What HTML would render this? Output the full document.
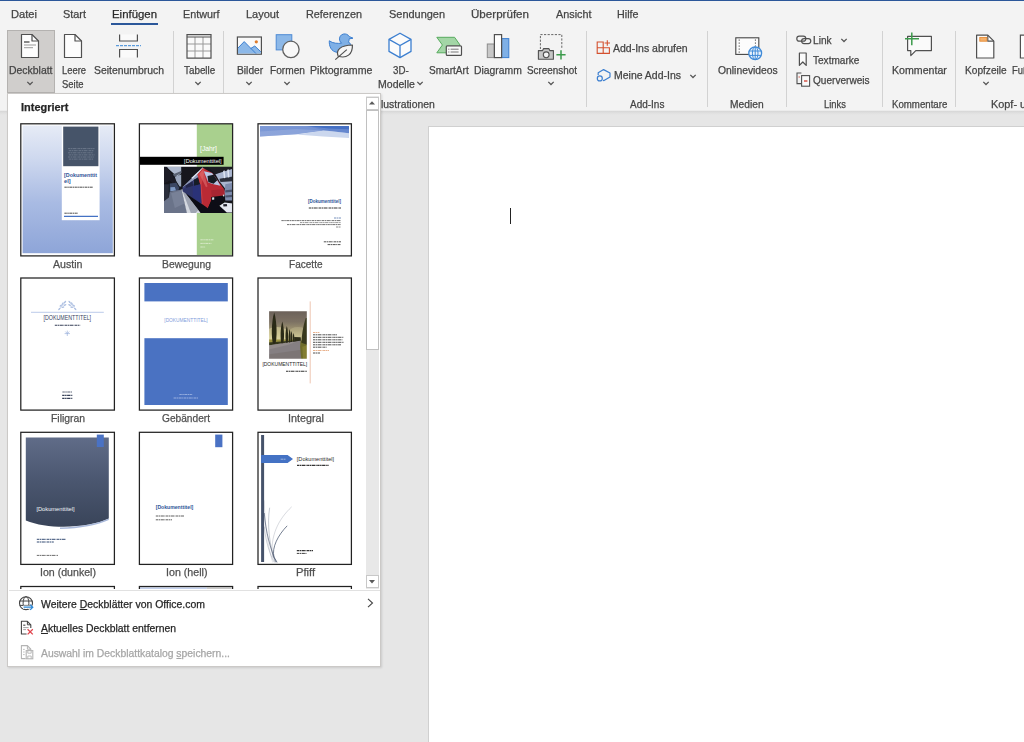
<!DOCTYPE html>
<html><head><meta charset="utf-8"><title>Word</title>
<style>
html,body{margin:0;padding:0}
body{width:1024px;height:742px;overflow:hidden;position:relative;background:#e6e6e6;font-family:"Liberation Sans",sans-serif;}
.r{position:absolute;display:block}
.t{position:absolute;white-space:nowrap;transform-origin:0 50%;display:block;-webkit-text-stroke:0.25px currentColor}
u{text-decoration:underline;text-underline-offset:1px}
svg{overflow:visible}
</style></head><body>
<div class="r" style="left:0px;top:0px;width:1024px;height:111px;background:#f3f3f3;"></div>
<div class="r" style="left:0px;top:0px;width:1024px;height:1px;background:#2b579a;"></div>
<div class="r" style="left:0px;top:110px;width:1024px;height:1px;background:#ececec;"></div>
<div class="r" style="left:0px;top:111px;width:1024px;height:4px;background:linear-gradient(#d6d6d6,#e0e0e0 50%,#e6e6e6);"></div>
<div class="r" style="left:429px;top:127px;width:600px;height:620px;background:#fff;box-shadow:0 0 0 1px #d0d0d0"></div>
<div class="r" style="left:510px;top:208px;width:1px;height:16px;background:#222;"></div>
<span class="t" style="left:11.0px;top:7.2px;font-size:11px;line-height:14px;color:#444;transform:scaleX(1.013)">Datei</span>
<span class="t" style="left:63.0px;top:7.2px;font-size:11px;line-height:14px;color:#444;transform:scaleX(0.990)">Start</span>
<span class="t" style="left:111.5px;top:7.2px;font-size:11px;line-height:14px;color:#2a2a2a;transform:scaleX(1.036)">Einfügen</span>
<div class="r" style="left:111px;top:23px;width:47px;height:2px;background:#2b579a;"></div>
<span class="t" style="left:182.5px;top:7.2px;font-size:11px;line-height:14px;color:#444;transform:scaleX(0.979)">Entwurf</span>
<span class="t" style="left:246.0px;top:7.2px;font-size:11px;line-height:14px;color:#444;transform:scaleX(0.999)">Layout</span>
<span class="t" style="left:305.5px;top:7.2px;font-size:11px;line-height:14px;color:#444;transform:scaleX(0.985)">Referenzen</span>
<span class="t" style="left:388.5px;top:7.2px;font-size:11px;line-height:14px;color:#444;transform:scaleX(0.995)">Sendungen</span>
<span class="t" style="left:470.5px;top:7.2px;font-size:11px;line-height:14px;color:#444;transform:scaleX(1.054)">Überprüfen</span>
<span class="t" style="left:555.5px;top:7.2px;font-size:11px;line-height:14px;color:#444;transform:scaleX(0.984)">Ansicht</span>
<span class="t" style="left:617.0px;top:7.2px;font-size:11px;line-height:14px;color:#444;transform:scaleX(0.977)">Hilfe</span>
<div class="r" style="left:7px;top:30px;width:48px;height:63px;background:#d0cecc;box-shadow:inset 0 0 0 1px #b4b2b0, inset 0 -1px 0 0 #9c9a98"></div>
<span class="t" style="left:9.0px;top:62.9px;font-size:10.5px;line-height:14px;color:#444;transform:scaleX(0.994)">Deckblatt</span>
<svg class="r" style="left:26px;top:80px" width="8" height="6" viewBox="0 0 8 6"><path d="M1.3 1.9 L4 4.5 L6.7 1.9" fill="none" stroke="#555" stroke-width="1.3"/></svg>
<span class="t" style="left:61.5px;top:62.9px;font-size:10.5px;line-height:14px;color:#444;transform:scaleX(0.894)">Leere</span>
<span class="t" style="left:62.0px;top:76.9px;font-size:10.5px;line-height:14px;color:#444;transform:scaleX(0.898)">Seite</span>
<span class="t" style="left:93.5px;top:62.9px;font-size:10.5px;line-height:14px;color:#444;transform:scaleX(0.991)">Seitenumbruch</span>
<span class="t" style="left:183.5px;top:62.9px;font-size:10.5px;line-height:14px;color:#444;transform:scaleX(0.938)">Tabelle</span>
<svg class="r" style="left:194px;top:80px" width="8" height="6" viewBox="0 0 8 6"><path d="M1.3 1.9 L4 4.5 L6.7 1.9" fill="none" stroke="#555" stroke-width="1.3"/></svg>
<span class="t" style="left:236.6px;top:62.9px;font-size:10.5px;line-height:14px;color:#444;transform:scaleX(0.976)">Bilder</span>
<svg class="r" style="left:245px;top:80px" width="8" height="6" viewBox="0 0 8 6"><path d="M1.3 1.9 L4 4.5 L6.7 1.9" fill="none" stroke="#555" stroke-width="1.3"/></svg>
<span class="t" style="left:270.0px;top:62.9px;font-size:10.5px;line-height:14px;color:#444;transform:scaleX(0.968)">Formen</span>
<svg class="r" style="left:283px;top:80px" width="8" height="6" viewBox="0 0 8 6"><path d="M1.3 1.9 L4 4.5 L6.7 1.9" fill="none" stroke="#555" stroke-width="1.3"/></svg>
<span class="t" style="left:310.0px;top:62.9px;font-size:10.5px;line-height:14px;color:#444;transform:scaleX(1.009)">Piktogramme</span>
<span class="t" style="left:393.3px;top:62.9px;font-size:10.5px;line-height:14px;color:#444;transform:scaleX(0.928)">3D-</span>
<span class="t" style="left:377.5px;top:76.9px;font-size:10.5px;line-height:14px;color:#444;transform:scaleX(1.004)">Modelle</span>
<svg class="r" style="left:416px;top:80px" width="8" height="6" viewBox="0 0 8 6"><path d="M1.3 1.9 L4 4.5 L6.7 1.9" fill="none" stroke="#555" stroke-width="1.3"/></svg>
<span class="t" style="left:429.0px;top:62.9px;font-size:10.5px;line-height:14px;color:#444;transform:scaleX(0.958)">SmartArt</span>
<span class="t" style="left:474.0px;top:62.9px;font-size:10.5px;line-height:14px;color:#444;transform:scaleX(0.987)">Diagramm</span>
<span class="t" style="left:527.2px;top:62.9px;font-size:10.5px;line-height:14px;color:#444;transform:scaleX(0.941)">Screenshot</span>
<svg class="r" style="left:547px;top:80px" width="8" height="6" viewBox="0 0 8 6"><path d="M1.3 1.9 L4 4.5 L6.7 1.9" fill="none" stroke="#555" stroke-width="1.3"/></svg>
<span class="t" style="left:613.3px;top:40.9px;font-size:10.5px;line-height:14px;color:#444;transform:scaleX(0.999)">Add-Ins abrufen</span>
<span class="t" style="left:614.0px;top:68.4px;font-size:10.5px;line-height:14px;color:#444;transform:scaleX(0.998)">Meine Add-Ins</span>
<svg class="r" style="left:689px;top:73px" width="8" height="6" viewBox="0 0 8 6"><path d="M1.3 1.9 L4 4.5 L6.7 1.9" fill="none" stroke="#555" stroke-width="1.3"/></svg>
<span class="t" style="left:717.5px;top:62.9px;font-size:10.5px;line-height:14px;color:#444;transform:scaleX(0.985)">Onlinevideos</span>
<span class="t" style="left:813.4px;top:32.9px;font-size:10.5px;line-height:14px;color:#444;transform:scaleX(0.966)">Link</span>
<svg class="r" style="left:840px;top:37px" width="8" height="6" viewBox="0 0 8 6"><path d="M1.3 1.9 L4 4.5 L6.7 1.9" fill="none" stroke="#555" stroke-width="1.3"/></svg>
<span class="t" style="left:813.4px;top:52.9px;font-size:10.5px;line-height:14px;color:#444;transform:scaleX(0.958)">Textmarke</span>
<span class="t" style="left:813.0px;top:72.9px;font-size:10.5px;line-height:14px;color:#444;transform:scaleX(0.960)">Querverweis</span>
<span class="t" style="left:891.5px;top:62.9px;font-size:10.5px;line-height:14px;color:#444;transform:scaleX(1.010)">Kommentar</span>
<span class="t" style="left:964.7px;top:62.9px;font-size:10.5px;line-height:14px;color:#444;transform:scaleX(0.965)">Kopfzeile</span>
<svg class="r" style="left:981.5px;top:80px" width="8" height="6" viewBox="0 0 8 6"><path d="M1.3 1.9 L4 4.5 L6.7 1.9" fill="none" stroke="#555" stroke-width="1.3"/></svg>
<span class="t" style="left:1012.3px;top:62.9px;font-size:10.5px;line-height:14px;color:#444;transform:scaleX(0.895)">Fuß</span>
<span class="t" style="left:381.0px;top:96.9px;font-size:10.5px;line-height:14px;color:#444;transform:scaleX(0.991)">lustrationen</span>
<span class="t" style="left:629.8px;top:96.9px;font-size:10.5px;line-height:14px;color:#444;transform:scaleX(0.951)">Add-Ins</span>
<span class="t" style="left:730.4px;top:96.9px;font-size:10.5px;line-height:14px;color:#444;transform:scaleX(0.976)">Medien</span>
<span class="t" style="left:823.6px;top:96.9px;font-size:10.5px;line-height:14px;color:#444;transform:scaleX(0.893)">Links</span>
<span class="t" style="left:891.5px;top:96.9px;font-size:10.5px;line-height:14px;color:#444;transform:scaleX(0.920)">Kommentare</span>
<span class="t" style="left:990.9px;top:96.9px;font-size:10.5px;line-height:14px;color:#444;transform:scaleX(1.037)">Kopf- u</span>
<div class="r" style="left:173px;top:31px;width:1px;height:76px;background:#d2d2d2;"></div>
<div class="r" style="left:223px;top:31px;width:1px;height:76px;background:#d2d2d2;"></div>
<div class="r" style="left:586px;top:31px;width:1px;height:76px;background:#d2d2d2;"></div>
<div class="r" style="left:707px;top:31px;width:1px;height:76px;background:#d2d2d2;"></div>
<div class="r" style="left:786px;top:31px;width:1px;height:76px;background:#d2d2d2;"></div>
<div class="r" style="left:882px;top:31px;width:1px;height:76px;background:#d2d2d2;"></div>
<div class="r" style="left:955px;top:31px;width:1px;height:76px;background:#d2d2d2;"></div>
<svg class="r" style="left:0;top:0" width="1024" height="111" viewBox="0 0 1024 111"><path d="M21.5 34.5 H32.0 L38.5 41.0 V57.5 H21.5 Z" fill="#fdfdfd" stroke="#505050" stroke-width="1.2" stroke-linejoin="round"/><path d="M32.0 34.5 V41.0 H38.5" fill="none" stroke="#505050" stroke-width="1.2" stroke-linejoin="round"/><path d="M24 42 H29.5" stroke="#555" stroke-width="1.4"/><path d="M24 45 H36 M24 47.7 H33" stroke="#9a9a9a" stroke-width="1"/><path d="M64.5 34.5 H75.0 L81.5 41.0 V57.5 H64.5 Z" fill="#fdfdfd" stroke="#505050" stroke-width="1.2" stroke-linejoin="round"/><path d="M75.0 34.5 V41.0 H81.5" fill="none" stroke="#505050" stroke-width="1.2" stroke-linejoin="round"/><path d="M119.6 34.4 V41 H137.4 V34.4" fill="#fafafa" stroke="#505050" stroke-width="1.2"/><path d="M119.6 57.6 V49.5 H137.4 V57.6" fill="#fafafa" stroke="#505050" stroke-width="1.2"/><path d="M116 45.6 H141" stroke="#5b9bdc" stroke-width="1.2" stroke-dasharray="3 1"/><rect x="187" y="34.6" width="24" height="23.5" fill="#fafafa"/><path d="M195 37 V58 M203 37 V58 M187 44 H211 M187 51 H211" stroke="#9a9a9a" stroke-width="1"/><path d="M187 34.6 H211 V58.1 H187 Z M187 37 H211" fill="none" stroke="#505050" stroke-width="1.2"/><rect x="237.4" y="37" width="24" height="17.2" fill="#fafafa" stroke="#505050" stroke-width="1.2"/><path d="M238 48 L244.2 41.6 L250.6 48.2 L254.8 46 L260.8 51.8 V53.6 H238 Z" fill="#8cb8e8"/><path d="M238 48 L244.2 41.6 L256 53.6 M250.6 48.6 L254.8 46 L260.8 51.8" fill="none" stroke="#3c7fd0" stroke-width="1"/><circle cx="256.3" cy="41.8" r="1.6" fill="#e07c2c"/><rect x="276.2" y="34.7" width="15.6" height="15.2" fill="#8cb8e8" stroke="#4e8ad4" stroke-width="1"/><circle cx="290.9" cy="49.4" r="8.2" fill="#f8f8f8" stroke="#606060" stroke-width="1.3"/><path d="M329.3 40.8 C329 46 331 51.5 337 52.3 H346 C351 51.5 352 46.5 350 43.2 L348.3 42.2 C349.2 40.8 349.2 39.6 349 38.9 L353 38.2 L349.3 36.6 C348 34.3 345.5 33.7 343.6 34 C340.5 34.5 339 37.5 339.6 40.2 C339.9 41.6 340.8 42.6 341.6 43.2 C338 43.6 333 43.6 329.3 40.8 Z" fill="#7fb0e6" stroke="#3c7fd0" stroke-width="1"/><path d="M338.2 56.2 C335.5 50 340.5 45.2 352.4 45 C352.8 54.5 346.5 58.8 338.2 56.2 Z" fill="#f6f6f6" stroke="#505050" stroke-width="1.2" stroke-linejoin="round"/><path d="M335.3 59.6 L346.8 49.6" stroke="#505050" stroke-width="1.2"/><path d="M400 33.2 L411 39.4 V51.4 L400 57.6 L389 51.4 V39.4 Z" fill="#fbfbfb" stroke="#3c7fd0" stroke-width="1.3" stroke-linejoin="round"/><path d="M389 39.4 L400 45.6 L411 39.4 M400 45.6 V57.6" fill="none" stroke="#3c7fd0" stroke-width="1.3"/><path d="M436.8 37.3 H454.6 L460 45 L455 52.8 H436.8 L442.4 45 Z" fill="#a3d6a6" stroke="#58ab5e" stroke-width="1"/><rect x="446.3" y="45.8" width="15.2" height="9.6" rx="1" fill="#fafafa" stroke="#505050" stroke-width="1.2"/><path d="M450.6 49.2 H458.6 M450.6 52 H458.6" stroke="#777" stroke-width="1"/><path d="M448.2 49.2 H449.4 M448.2 52 H449.4" stroke="#777" stroke-width="1"/><rect x="487.3" y="44" width="7" height="13.6" fill="#c8c8c8" stroke="#8c8c8c" stroke-width="1"/><rect x="501.6" y="38.6" width="7.2" height="19" fill="#7fb0e6" stroke="#3c7fd0" stroke-width="1"/><rect x="494.4" y="34.6" width="7.2" height="23" fill="#fdfdfd" stroke="#505050" stroke-width="1.2"/><path d="M540.4 49 V34.6 H561.8 V49" fill="none" stroke="#666" stroke-width="1" stroke-dasharray="2.2 1.4"/><path d="M538.4 50.6 H542.6 L543.6 48.6 H548.8 L549.8 50.6 H553.4 V59.2 H538.4 Z" fill="#c6c6c6" stroke="#505050" stroke-width="1.1" stroke-linejoin="round"/><circle cx="546.2" cy="54.8" r="2.9" fill="#f4f4f4" stroke="#505050" stroke-width="1.1"/><path d="M556.4 54.8 H565.6 M561 50.2 V59.4" stroke="#3c9b4c" stroke-width="1.5"/><path d="M597.2 42 H603.2 V53.4 H597.2 Z M597.2 47.7 H609.4 V53.4 H603.2 M603.2 47.7 V42" fill="none" stroke="#d4502e" stroke-width="1.1"/><path d="M604.6 43 H610 M607.3 40.2 V45.8" stroke="#d4502e" stroke-width="1.1"/><path d="M598.2 75 V72.8 L603.6 69.6 L610 73 V77 L604 80.6 L603 80.2" fill="none" stroke="#3c7fd0" stroke-width="1.2" stroke-linejoin="round"/><circle cx="599.8" cy="78.4" r="2.5" fill="none" stroke="#3c7fd0" stroke-width="1.2"/><rect x="735.8" y="37.8" width="23" height="16.6" fill="#fcfcfc" stroke="#444" stroke-width="1.1"/><path d="M739.2 39.5 V53 M755.4 39.5 V46" stroke="#444" stroke-width="1" stroke-dasharray="1.2 1.8"/><circle cx="755.2" cy="53.2" r="6.4" fill="#eaf3fc" stroke="#3f8ad8" stroke-width="1.3"/><ellipse cx="755.2" cy="53.2" rx="2.8" ry="6.4" fill="none" stroke="#3f8ad8" stroke-width="1"/><path d="M749.4 51 H761 M749.4 55.4 H761 M755.2 46.8 V59.6" stroke="#3f8ad8" stroke-width="1"/><rect x="796.8" y="36.2" width="9" height="5" rx="2.5" fill="none" stroke="#505050" stroke-width="1.2"/><rect x="801.6" y="38.6" width="9.2" height="5" rx="2.5" fill="none" stroke="#505050" stroke-width="1.2"/><path d="M799.4 53 H806.2 V65.4 L802.8 62 L799.4 65.4 Z" fill="#fafafa" stroke="#505050" stroke-width="1.2" stroke-linejoin="round"/><path d="M801.4 73 H797 V83.6 H801.4" fill="none" stroke="#505050" stroke-width="1.1"/><rect x="801.6" y="75.6" width="8" height="10.6" fill="#fafafa" stroke="#505050" stroke-width="1.1"/><path d="M804 81 H807.4" stroke="#d03a2a" stroke-width="1.3"/><path d="M798.6 77 H799.8" stroke="#d03a2a" stroke-width="1.2"/><path d="M907.6 36.4 H931.4 V50.6 H915.8 L910.8 55.6 V50.6 H907.6 Z" fill="#fafafa" stroke="#505050" stroke-width="1.2" stroke-linejoin="round"/><path d="M905 38.8 H919 M911.8 32.4 V45.2" stroke="#3c9b4c" stroke-width="1.5"/><path d="M976.6 35.2 H987.8000000000001 L993.8000000000001 41.2 V58.0 H976.6 Z" fill="#fdfdfd" stroke="#505050" stroke-width="1.2" stroke-linejoin="round"/><path d="M987.8000000000001 35.2 V41.2 H993.8000000000001" fill="none" stroke="#505050" stroke-width="1.2" stroke-linejoin="round"/><rect x="979.8" y="37.4" width="7" height="3.8" fill="#f4b06a" stroke="#e58a34" stroke-width="0.9"/><path d="M1026 35.2 H1020.4 V58 H1026" fill="#fdfdfd" stroke="#505050" stroke-width="1.2"/></svg>
<div class="r" style="left:8px;top:94px;width:372px;height:572px;background:#fff;box-shadow:0 0 0 1px #cbc9c7, 1px 1px 2px 1px rgba(0,0,0,.12)"></div>
<span class="t" style="left:21.0px;top:100.2px;font-size:11px;line-height:14px;color:#262626;font-weight:bold;transform:scaleX(0.996)">Integriert</span>
<div class="r" style="left:365.5px;top:96px;width:13px;height:493px;background:#e8e8e8;"></div>
<div class="r" style="left:365.5px;top:110px;width:13px;height:240px;background:#fff;box-shadow:inset 0 0 0 1px #c0c0c0"></div>
<div class="r" style="left:365.5px;top:97px;width:13px;height:13px;background:#fff;box-shadow:inset 0 0 0 1px #c8c8c8"></div>
<div class="r" style="left:365.5px;top:575px;width:13px;height:13px;background:#fff;box-shadow:inset 0 0 0 1px #c8c8c8"></div>
<svg class="r" style="left:369px;top:101.4px" width="6" height="4"><path d="M0 3.6 L3 0.2 L6 3.6Z" fill="#5a5a5a"/></svg>
<svg class="r" style="left:369px;top:579.6px" width="6" height="4"><path d="M0 0 L3 3.4 L6 0Z" fill="#5a5a5a"/></svg>
<svg class="r" style="left:8px;top:94px;overflow:hidden" width="358" height="495" viewBox="8 94 358 495" font-family="Liberation Sans, sans-serif"><defs><linearGradient id="ga" x1="0" y1="0" x2="0" y2="1"><stop offset="0" stop-color="#e6ebf6"/><stop offset="0.25" stop-color="#cfd9ef"/><stop offset="0.6" stop-color="#a9bbe3"/><stop offset="1" stop-color="#8ea5d8"/></linearGradient><clipPath id="cb"><rect x="164" y="166.8" width="68.2" height="46.2"/></clipPath><filter id="bl" x="-5%" y="-5%" width="110%" height="110%"><feGaussianBlur stdDeviation="0.45"/></filter><linearGradient id="gf" x1="0" y1="0" x2="1" y2="0"><stop offset="0" stop-color="#7d99d6"/><stop offset="1" stop-color="#6f8fd2"/></linearGradient><clipPath id="ci"><rect x="269.1" y="311.3" width="37.7" height="47.5"/></clipPath><linearGradient id="gi" x1="0" y1="0" x2="0" y2="1"><stop offset="0" stop-color="#685e58"/><stop offset="0.25" stop-color="#7d7264"/><stop offset="0.42" stop-color="#a39972"/><stop offset="0.56" stop-color="#cbc391"/><stop offset="0.66" stop-color="#c4bb84"/><stop offset="1" stop-color="#8a867c"/></linearGradient><filter id="bi" x="-5%" y="-5%" width="110%" height="110%"><feGaussianBlur stdDeviation="0.5"/></filter><linearGradient id="gd" x1="0" y1="0" x2="0" y2="1"><stop offset="0" stop-color="#606c88"/><stop offset="0.5" stop-color="#4a566f"/><stop offset="1" stop-color="#394459"/></linearGradient></defs><rect x="20.2" y="123.2" width="94.8" height="133.3" fill="#fff"/><rect x="138.8" y="123.2" width="94.4" height="133.3" fill="#fff"/><rect x="257.4" y="123.2" width="94.6" height="133.3" fill="#fff"/><rect x="20.2" y="277.4" width="94.8" height="133.3" fill="#fff"/><rect x="138.8" y="277.4" width="94.4" height="133.3" fill="#fff"/><rect x="257.4" y="277.4" width="94.6" height="133.3" fill="#fff"/><rect x="20.2" y="431.7" width="94.8" height="133.3" fill="#fff"/><rect x="138.8" y="431.7" width="94.4" height="133.3" fill="#fff"/><rect x="257.4" y="431.7" width="94.6" height="133.3" fill="#fff"/><rect x="20.2" y="585.9" width="94.8" height="133.3" fill="#fff"/><rect x="138.8" y="585.9" width="94.4" height="133.3" fill="#fff"/><rect x="257.4" y="585.9" width="94.6" height="133.3" fill="#fff"/><rect x="139.8" y="587.3" width="67" height="4" fill="#c3d0ec"/><rect x="206.8" y="587.3" width="25" height="4" fill="#c9c9c9"/><rect x="22.6" y="125.6" width="90.2" height="127.6" fill="url(#ga)"/><rect x="61.8" y="125.6" width="37.8" height="94.6" fill="#fff"/><rect x="63.2" y="126.6" width="35.2" height="39.6" fill="#465469"/><path d="M68.0 148.6 H94.5" stroke="#9aa3b2" stroke-width="0.8" opacity="0.55" stroke-dasharray="2.4 0.5 1.5 0.5 3.2 0.5 1 0.5"/><path d="M68.8 150.7 H93.8" stroke="#9aa3b2" stroke-width="0.8" opacity="0.55" stroke-dasharray="2.4 0.5 1.5 0.5 3.2 0.5 1 0.5"/><path d="M68.0 152.8 H93.1" stroke="#9aa3b2" stroke-width="0.8" opacity="0.55" stroke-dasharray="2.4 0.5 1.5 0.5 3.2 0.5 1 0.5"/><path d="M68.8 154.9 H94.5" stroke="#9aa3b2" stroke-width="0.8" opacity="0.55" stroke-dasharray="2.4 0.5 1.5 0.5 3.2 0.5 1 0.5"/><path d="M68.0 157 H93.8" stroke="#9aa3b2" stroke-width="0.8" opacity="0.55" stroke-dasharray="2.4 0.5 1.5 0.5 3.2 0.5 1 0.5"/><path d="M68.8 159.1 H93.1" stroke="#9aa3b2" stroke-width="0.8" opacity="0.55" stroke-dasharray="2.4 0.5 1.5 0.5 3.2 0.5 1 0.5"/><text x="64" y="176.6" font-size="5.6" fill="#2f5597" font-weight="bold" textLength="33" lengthAdjust="spacingAndGlyphs">[Dokumenttit</text><text x="64" y="183.2" font-size="5.6" fill="#2f5597" font-weight="bold" textLength="6.6" lengthAdjust="spacingAndGlyphs">el]</text><path d="M64.4 187.2 H93" stroke="#222" stroke-width="1" opacity="0.8" stroke-dasharray="2.4 0.5 1.5 0.5 3.2 0.5 1 0.5"/><path d="M64.4 213.2 H78" stroke="#222" stroke-width="1" opacity="0.8" stroke-dasharray="2.4 0.5 1.5 0.5 3.2 0.5 1 0.5"/><path d="M64 216.3 H98" stroke="#4472c4" stroke-width="1.3" opacity="1"/><rect x="196.8" y="124" width="35.4" height="131" fill="#a9d08e"/><text x="208.5" y="150.8" font-size="6.6" fill="#fff" text-anchor="middle" textLength="17" lengthAdjust="spacingAndGlyphs">[Jahr]</text><rect x="139" y="156.8" width="84.6" height="8" fill="#000"/><text x="221.6" y="163" font-size="5.6" fill="#fff" text-anchor="end" textLength="37.5" lengthAdjust="spacingAndGlyphs">[Dokumenttitel]</text><g clip-path="url(#cb)"><g filter="url(#bl)"><rect x="162" y="165" width="72" height="50" fill="#14161c"/><polygon points="165.9,166.5 181.2,166.5 181.2,173.1 177.1,176.8 174.8,174.6" fill="#aeb9cd"/><polygon points="172.6,174.6 181.2,170.9 181.2,173.1 174.8,176.8" fill="#5a6272"/><polygon points="174.8,176.8 181.2,174.6 181.2,186.5 179.3,186.5 176.3,181.3" fill="#9aa6bc"/><polygon points="163.0,166.5 166.7,166.5 180.0,187.2 178.6,188.7 169.7,180.6 163.0,184.3" fill="#1c1f27"/><polygon points="169.7,183.5 176.3,182.8 179.3,188.0 177.8,191.7 169.7,191.7" fill="#3a4664"/><polygon points="170.4,187.2 174.8,186.9 176.0,190.6 170.4,191.3" fill="#7f9ac4"/><polygon points="163.0,184.3 168.9,184.3 168.9,199.1 163.0,202.1" fill="#2a2e3a"/><polygon points="163.0,202.1 168.9,197.6 169.7,191.7 181.5,189.5 187.5,214.0 163.0,214.0" fill="#6b7389"/><polygon points="171.1,193.2 181.2,190.6 184.5,203.6 174.8,208.0" fill="#788197"/><polygon points="181.4,189.6 182.6,189.3 201.6,214.0 187.1,214.0" fill="#d4d8e0"/><polygon points="182.3,190.6 183.2,190.2 198.6,209.5 194.9,214.0 191.2,214.0" fill="#9ea4b2"/><polygon points="182.6,189.3 201.6,203.6 207.5,208.0 223.8,203.6 232.8,206.5 232.8,214.0 201.6,214.0" fill="#0e1016"/><polygon points="182.6,186.9 202.7,167.6 204.5,169.1 200.1,176.1 183.4,188.0" fill="#8e97b6"/><polygon points="191.2,178.0 202.7,167.6 203.4,168.3 192.7,178.7" fill="#dfe4f0"/><polygon points="182.6,187.6 200.5,175.7 201.6,203.9 182.6,191.3" fill="#2f3568"/><polygon points="182.6,187.6 200.5,175.7 200.5,180.6 182.6,188.9" fill="#3e457e"/><polygon points="193.8,179.8 200.1,176.8 200.5,184.3 194.1,185.8" fill="#191b28"/><polygon points="185.6,185.8 192.7,180.9 193.0,185.8 185.8,188.0" fill="#23264a"/><polygon points="197.5,174.6 203.1,168.1 212.3,173.1 217.5,180.2 224.0,188.9 225.2,193.2 223.1,196.9 212.0,199.1 207.9,208.2 201.6,203.7 200.2,184.3" fill="#b92b35"/><polygon points="197.5,174.6 203.1,168.1 204.5,169.4 201.6,184.3 202.7,203.6 201.6,203.7 200.2,184.3" fill="#cb4045"/><polygon points="199.3,173.9 203.1,169.4 207.5,186.5 206.0,187.2" fill="#e8777a" opacity="0.5"/><polygon points="192.7,186.5 200.5,184.3 201.6,203.7 192.7,196.9" fill="#2c3278"/><polygon points="203.8,171.3 212.0,173.1 217.2,180.2 220.5,185.8 213.5,184.3 208.3,182.4" fill="#b8c6e4"/><polygon points="207.5,176.1 213.6,174.8 217.3,180.2 213.6,183.7 208.3,182.0" fill="#171a22"/><polygon points="211.2,190.2 224.0,188.9 225.2,193.2 223.1,196.9 212.0,199.1" fill="#a82630"/><polygon points="211.2,196.9 223.8,195.4 225.3,200.6 219.4,206.5 207.9,208.2 211.2,200.6" fill="#0c0d12"/><polygon points="212.0,197.5 214.2,197.2 214.3,199.5 212.3,199.9" fill="#dfe3ea"/><polygon points="222.8,194.7 224.3,194.4 224.4,196.3 223.1,196.6" fill="#cfd4de"/><polygon points="215.3,173.9 232.8,167.2 232.8,186.5 225.3,188.7 219.4,181.3" fill="#aab6d0"/><polygon points="207.5,166.5 232.8,166.5 232.8,168.7 215.3,174.2" fill="#1a1c24"/><polygon points="219.4,178.7 232.8,176.5 232.8,181.3 220.5,182.0" fill="#2a2e3a"/><polygon points="223.1,170.9 224.6,170.3 225.3,178.0 224.0,178.2" fill="#dfe6f4"/><polygon points="227.2,169.8 228.7,169.3 229.4,177.2 227.9,177.4" fill="#dfe6f4"/><polygon points="225.3,184.3 232.8,182.8 232.8,200.6 225.3,200.6 224.6,191.7" fill="#7d8cad"/><polygon points="225.3,190.2 232.8,189.5 232.8,191.7 225.3,192.4" fill="#4a536c"/><polygon points="225.3,195.4 232.8,194.7 232.8,196.9 225.3,197.6" fill="#4a536c"/><polygon points="219.4,205.8 224.6,202.5 232.8,203.6 232.8,212.5 226.8,212.5" fill="#e4e8f0"/><polygon points="223.1,204.3 226.8,203.9 227.2,206.2 223.5,206.5" fill="#20232c"/></g></g><path d="M200.4 239.8 H213.8" stroke="#eaf4e0" stroke-width="0.9" opacity="0.8" stroke-dasharray="2.4 0.5 1.5 0.5 3.2 0.5 1 0.5"/><path d="M200.4 243.4 H211.4" stroke="#eaf4e0" stroke-width="0.9" opacity="0.8" stroke-dasharray="2.4 0.5 1.5 0.5 3.2 0.5 1 0.5"/><path d="M200.4 247 H205.4" stroke="#eaf4e0" stroke-width="0.9" opacity="0.8" stroke-dasharray="2.4 0.5 1.5 0.5 3.2 0.5 1 0.5"/><polygon points="260.0,126.0 349.0,126.0 349.0,127.9 324.9,130.4 296.2,134.2 260.0,136.5" fill="url(#gf)"/><polygon points="296.2,134.4 324.9,130.4 349.0,133.3 349.0,138.1 323.0,136.5" fill="#cbd7ee"/><polygon points="309.6,126.4 349.0,127.7 349.0,133.3 324.9,130.4" fill="#6587ce"/><polygon points="306.7,126.0 349.0,126.0 349.0,129.3 328.7,128.5" fill="#4570c4"/><polygon points="260.0,131.6 296.2,128.9 324.9,130.4 296.2,134.2 260.0,136.5" fill="#9db2e0" opacity="0.5"/><text x="341" y="203.4" font-size="5" fill="#2f5597" text-anchor="end" font-weight="bold" textLength="33" lengthAdjust="spacingAndGlyphs">[Dokumenttitel]</text><path d="M308.8 208 H341" stroke="#111" stroke-width="1" opacity="0.85" stroke-dasharray="2.4 0.5 1.5 0.5 3.2 0.5 1 0.5"/><path d="M334 218 H341" stroke="#2f5597" stroke-width="0.8" opacity="0.8" stroke-dasharray="2.4 0.5 1.5 0.5 3.2 0.5 1 0.5"/><path d="M281.4 220.6 H341" stroke="#111" stroke-width="0.8" opacity="0.75" stroke-dasharray="2.4 0.5 1.5 0.5 3.2 0.5 1 0.5"/><path d="M300 222.6 H341" stroke="#111" stroke-width="0.8" opacity="0.55" stroke-dasharray="2.4 0.5 1.5 0.5 3.2 0.5 1 0.5"/><path d="M287 224.6 H341" stroke="#111" stroke-width="0.8" opacity="0.75" stroke-dasharray="2.4 0.5 1.5 0.5 3.2 0.5 1 0.5"/><path d="M336 227 H341" stroke="#111" stroke-width="0.8" opacity="0.6" stroke-dasharray="2.4 0.5 1.5 0.5 3.2 0.5 1 0.5"/><path d="M323.8 241.8 H341" stroke="#111" stroke-width="0.9" opacity="0.8" stroke-dasharray="2.4 0.5 1.5 0.5 3.2 0.5 1 0.5"/><path d="M327.6 244.6 H341" stroke="#111" stroke-width="0.9" opacity="0.8" stroke-dasharray="2.4 0.5 1.5 0.5 3.2 0.5 1 0.5"/><g stroke="#9db3dc" stroke-width="0.6" fill="none" opacity="0.85"><path d="M59.2 309.4 L65.6 301.6 M75.4 309.4 L69 301.6"/></g><g fill="#9db3dc" opacity="0.8"><ellipse cx="60.8" cy="305.6" rx="1.5" ry="0.75" transform="rotate(-40 60.8 305.6)"/><ellipse cx="73.8" cy="305.6" rx="1.5" ry="0.75" transform="rotate(40 73.8 305.6)"/><ellipse cx="62.9" cy="307.2" rx="1.5" ry="0.75" transform="rotate(-15 62.9 307.2)"/><ellipse cx="71.7" cy="307.2" rx="1.5" ry="0.75" transform="rotate(15 71.7 307.2)"/><ellipse cx="62.7" cy="303.6" rx="1.5" ry="0.75" transform="rotate(-60 62.7 303.6)"/><ellipse cx="71.9" cy="303.6" rx="1.5" ry="0.75" transform="rotate(60 71.9 303.6)"/><ellipse cx="65.0" cy="305.0" rx="1.5" ry="0.75" transform="rotate(-25 65.0 305.0)"/><ellipse cx="69.6" cy="305.0" rx="1.5" ry="0.75" transform="rotate(25 69.6 305.0)"/><ellipse cx="65.0" cy="302.0" rx="1.5" ry="0.75" transform="rotate(-50 65.0 302.0)"/><ellipse cx="69.6" cy="302.0" rx="1.5" ry="0.75" transform="rotate(50 69.6 302.0)"/><ellipse cx="59.3" cy="309.0" rx="1.5" ry="0.75" transform="rotate(-50 59.3 309.0)"/><ellipse cx="75.3" cy="309.0" rx="1.5" ry="0.75" transform="rotate(50 75.3 309.0)"/></g><path d="M31 312.3 H103.8" stroke="#a9bee4" stroke-width="0.8" opacity="1"/><text x="67.3" y="319.7" font-size="6.6" fill="#34425f" text-anchor="middle" textLength="47.6" lengthAdjust="spacingAndGlyphs">[DOKUMENTTITEL]</text><path d="M54.8 325.2 H80.2" stroke="#1f2a44" stroke-width="1.1" opacity="0.9" stroke-dasharray="2.4 0.5 1.5 0.5 3.2 0.5 1 0.5"/><path d="M67.3 330.6 V336 M64.6 333.6 H70 M65.4 331.6 L67.3 333.6 L69.2 331.6" fill="none" stroke="#9db3dc" stroke-width="0.7"/><path d="M62.4 392 H72.4" stroke="#1f2a44" stroke-width="0.9" opacity="0.8" stroke-dasharray="2.4 0.5 1.5 0.5 3.2 0.5 1 0.5"/><path d="M62.2 395.4 H72.6" stroke="#1f2a44" stroke-width="1.2" opacity="0.9" stroke-dasharray="2.4 0.5 1.5 0.5 3.2 0.5 1 0.5"/><path d="M62.2 398.4 H72.6" stroke="#1f2a44" stroke-width="1.2" opacity="0.9" stroke-dasharray="2.4 0.5 1.5 0.5 3.2 0.5 1 0.5"/><rect x="144.4" y="283" width="83.4" height="18.4" fill="#4a72c2"/><rect x="144.4" y="338.2" width="83.4" height="66.8" fill="#4a72c2"/><text x="186" y="321.8" font-size="5.2" fill="#7f9cdb" text-anchor="middle" textLength="43.4" lengthAdjust="spacingAndGlyphs">[DOKUMENTTITEL]</text><path d="M179.4 394.4 H192.6" stroke="#c9d6f2" stroke-width="0.8" opacity="0.8" stroke-dasharray="2.4 0.5 1.5 0.5 3.2 0.5 1 0.5"/><path d="M173.6 398 H198" stroke="#c9d6f2" stroke-width="0.8" opacity="0.8" stroke-dasharray="2.4 0.5 1.5 0.5 3.2 0.5 1 0.5"/><g clip-path="url(#ci)"><g filter="url(#bi)"><rect x="267" y="309" width="42" height="52" fill="url(#gi)"/><ellipse cx="277" cy="334" rx="12" ry="7" fill="#e2daa4" opacity="0.55"/><ellipse cx="298" cy="332" rx="9" ry="5" fill="#d8d0a0" opacity="0.28"/><polygon points="267.9,339.6 295.3,339.6 300.7,340.4 267.9,343.1" fill="#9a9240" opacity="1"/><polygon points="267.9,342.6 300.7,340.1 300.7,340.9 267.9,345.9" fill="#35371f" opacity="1"/><polygon points="267.9,345.5 300.6,340.4 301.2,340.8 301.4,360.7 267.9,360.7" fill="#857f82" opacity="1"/><polygon points="267.9,345.5 300.6,340.4 287.5,345.1 267.9,349.8" fill="#999290" opacity="0.7"/><polygon points="267.9,354.5 301.4,349.8 301.4,360.7 267.9,360.7" fill="#77716f" opacity="0.7"/><polygon points="300.6,340.4 307.8,340.4 307.8,360.7 301.4,360.7 300.1,346.7" fill="#6e6c2c" opacity="1"/><polygon points="302.3,346.7 307.8,345.1 307.8,360.7 303.1,360.7" fill="#8a8434" opacity="0.7"/><path d="M274.2 312.6 C277.2 322.0 277.1 339.0 275.4 343.7 H273.0 C271.3 339.0 271.2 322.0 274.2 312.6 Z" fill="#2a2919"/><path d="M282.3 321.5 C284.4 328.0 284.4 340.0 283.2 343.2 H281.4 C280.2 340.0 280.2 328.0 282.3 321.5 Z" fill="#2a2919"/><path d="M286.8 325.9 C288.5 331.0 288.4 340.2 287.5 342.7 H286.2 C285.2 340.2 285.2 331.0 286.8 325.9 Z" fill="#2a2919"/><path d="M289.6 329.0 C290.9 333.0 290.9 340.4 290.2 342.4 H289.1 C288.4 340.4 288.4 333.0 289.6 329.0 Z" fill="#2a2919"/><path d="M291.5 331.0 C292.6 334.4 292.6 340.5 292.0 342.1 H291.1 C290.5 340.5 290.5 334.4 291.5 331.0 Z" fill="#2a2919"/><path d="M293.6 333.0 C294.5 335.6 294.5 340.5 293.9 341.8 H293.2 C292.6 340.5 292.6 335.6 293.6 333.0 Z" fill="#2a2919"/><polygon points="294.1,336.9 300.7,337.3 300.9,340.6 294.1,341.8" fill="#2a2919" opacity="1"/><path d="M305.8 318.1 C303.1 325.5 301.7 335.7 301.4 342.7 L307.8 345.1 V318.1 Z" fill="#38381f"/></g></g><path d="M310.2 0 H310.2" stroke="#000" stroke-width="0" opacity="0"/><path d="M310.2 301.4 V383.4" stroke="#ecbfa8" stroke-width="0.9"/><text x="262.4" y="366.4" font-size="6.2" fill="#262626" textLength="44.8" lengthAdjust="spacingAndGlyphs">[DOKUMENTTITEL]</text><path d="M286 371.2 H307" stroke="#111" stroke-width="1.1" opacity="0.85" stroke-dasharray="2.4 0.5 1.5 0.5 3.2 0.5 1 0.5"/><path d="M313 332.4 H319.4" stroke="#d9783a" stroke-width="0.8" opacity="0.8" stroke-dasharray="2.4 0.5 1.5 0.5 3.2 0.5 1 0.5"/><path d="M313 334.8 H337" stroke="#111" stroke-width="0.9" opacity="0.8" stroke-dasharray="2.4 0.5 1.5 0.5 3.2 0.5 1 0.5"/><path d="M313 337.3 H343.6" stroke="#111" stroke-width="0.9" opacity="0.8" stroke-dasharray="2.4 0.5 1.5 0.5 3.2 0.5 1 0.5"/><path d="M313 339.8 H342.4" stroke="#111" stroke-width="0.9" opacity="0.8" stroke-dasharray="2.4 0.5 1.5 0.5 3.2 0.5 1 0.5"/><path d="M313 342.3 H343.8" stroke="#111" stroke-width="0.9" opacity="0.8" stroke-dasharray="2.4 0.5 1.5 0.5 3.2 0.5 1 0.5"/><path d="M313 344.8 H341" stroke="#111" stroke-width="0.9" opacity="0.8" stroke-dasharray="2.4 0.5 1.5 0.5 3.2 0.5 1 0.5"/><path d="M313 347.2 H326.6" stroke="#111" stroke-width="0.9" opacity="0.8" stroke-dasharray="2.4 0.5 1.5 0.5 3.2 0.5 1 0.5"/><path d="M313 350.6 H329" stroke="#d9783a" stroke-width="0.8" opacity="0.8" stroke-dasharray="2.4 0.5 1.5 0.5 3.2 0.5 1 0.5"/><path d="M313 353 H320" stroke="#111" stroke-width="0.9" opacity="0.8" stroke-dasharray="2.4 0.5 1.5 0.5 3.2 0.5 1 0.5"/><path d="M25.8 437.4 H108.8 V518.6 C90 527.5 50 530.5 25.8 520.4 Z" fill="url(#gd)"/><path d="M60 527.6 C80 527 98 523.6 108.8 518.6 V520 C98 525 80 528.6 60 529 Z" fill="#9fb0d6" opacity="0.9"/><rect x="96.8" y="434.6" width="7" height="12.4" fill="#4a72c4"/><text x="36.4" y="511" font-size="6" fill="#f2f4f8" textLength="38.2" lengthAdjust="spacingAndGlyphs">[Dokumenttitel]</text><path d="M36.8 539.3 H66" stroke="#1f3864" stroke-width="1" opacity="0.9" stroke-dasharray="2.4 0.5 1.5 0.5 3.2 0.5 1 0.5"/><path d="M36.8 542 H53.8" stroke="#1f3864" stroke-width="1" opacity="0.9" stroke-dasharray="2.4 0.5 1.5 0.5 3.2 0.5 1 0.5"/><path d="M36.8 555.4 H58" stroke="#333" stroke-width="0.9" opacity="0.8" stroke-dasharray="2.4 0.5 1.5 0.5 3.2 0.5 1 0.5"/><rect x="215.2" y="434.6" width="7.2" height="12.6" fill="#4a72c4"/><text x="155.7" y="509.2" font-size="5.6" fill="#2f5597" font-weight="bold" textLength="37.6" lengthAdjust="spacingAndGlyphs">[Dokumenttitel]</text><path d="M155.8 516 H184" stroke="#222" stroke-width="0.9" opacity="0.8" stroke-dasharray="2.4 0.5 1.5 0.5 3.2 0.5 1 0.5"/><path d="M155.8 519.8 H172" stroke="#222" stroke-width="0.9" opacity="0.8" stroke-dasharray="2.4 0.5 1.5 0.5 3.2 0.5 1 0.5"/><rect x="261.1" y="435" width="3" height="127" fill="#46536b"/><path d="M261.1 455 H287.6 L293 459 L287.6 463 H261.1 Z" fill="#4472c4"/><path d="M280.6 459.2 H286" stroke="#dfe7f7" stroke-width="0.7" opacity="0.8" stroke-dasharray="2.4 0.5 1.5 0.5 3.2 0.5 1 0.5"/><text x="296.8" y="461" font-size="6" fill="#2c2c2c" textLength="37.3" lengthAdjust="spacingAndGlyphs">[Dokumenttitel]</text><path d="M297 465.4 H328.6" stroke="#111" stroke-width="1.1" opacity="0.85" stroke-dasharray="2.4 0.5 1.5 0.5 3.2 0.5 1 0.5"/><g fill="none" stroke="#3f4c66" stroke-linecap="round"><path d="M264.3 513.4 C265.7 531.9 270.6 549.4 275.9 562.0" stroke-width="0.8" opacity="0.8"/><path d="M264.3 527.0 C265.7 541.6 269.6 553.3 274.0 562.0" stroke-width="0.5" opacity="0.5"/><path d="M264.3 500.8 C264.7 524.1 267.7 545.5 272.5 562.0" stroke-width="0.4" opacity="0.35"/><path d="M269.6 508.1 C266.9 524.1 269.6 545.5 274.9 562.0" stroke-width="0.6" opacity="0.5"/><path d="M291.4 507.1 C278.3 519.3 269.6 536.7 272.7 557.1" stroke-width="0.5" opacity="0.4"/><path d="M286.9 526.1 C278.3 534.8 271.5 547.4 274.0 557.1 L276.9 562.0" stroke-width="0.85" opacity="0.85"/></g><path d="M296.8 550.6 H313" stroke="#111" stroke-width="1.1" opacity="0.85" stroke-dasharray="2.4 0.5 1.5 0.5 3.2 0.5 1 0.5"/><path d="M296.8 553.4 H307" stroke="#111" stroke-width="1" opacity="0.8" stroke-dasharray="2.4 0.5 1.5 0.5 3.2 0.5 1 0.5"/><rect x="20.8" y="123.8" width="93.6" height="132.10000000000002" fill="none" stroke="#222" stroke-width="1.25"/><rect x="139.4" y="123.8" width="93.2" height="132.10000000000002" fill="none" stroke="#222" stroke-width="1.25"/><rect x="258.0" y="123.8" width="93.39999999999999" height="132.10000000000002" fill="none" stroke="#222" stroke-width="1.25"/><rect x="20.8" y="278.0" width="93.6" height="132.10000000000002" fill="none" stroke="#222" stroke-width="1.25"/><rect x="139.4" y="278.0" width="93.2" height="132.10000000000002" fill="none" stroke="#222" stroke-width="1.25"/><rect x="258.0" y="278.0" width="93.39999999999999" height="132.10000000000002" fill="none" stroke="#222" stroke-width="1.25"/><rect x="20.8" y="432.3" width="93.6" height="132.10000000000002" fill="none" stroke="#222" stroke-width="1.25"/><rect x="139.4" y="432.3" width="93.2" height="132.10000000000002" fill="none" stroke="#222" stroke-width="1.25"/><rect x="258.0" y="432.3" width="93.39999999999999" height="132.10000000000002" fill="none" stroke="#222" stroke-width="1.25"/><rect x="20.8" y="586.5" width="93.6" height="132.10000000000002" fill="none" stroke="#222" stroke-width="1.25"/><rect x="139.4" y="586.5" width="93.2" height="132.10000000000002" fill="none" stroke="#222" stroke-width="1.25"/><rect x="258.0" y="586.5" width="93.39999999999999" height="132.10000000000002" fill="none" stroke="#222" stroke-width="1.25"/></svg>
<span class="t" style="left:53.0px;top:256.9px;font-size:10.5px;line-height:14px;color:#505050;transform:scaleX(1.011)">Austin</span>
<span class="t" style="left:162.0px;top:256.9px;font-size:10.5px;line-height:14px;color:#505050;transform:scaleX(0.987)">Bewegung</span>
<span class="t" style="left:288.5px;top:256.9px;font-size:10.5px;line-height:14px;color:#505050;transform:scaleX(0.957)">Facette</span>
<span class="t" style="left:51.0px;top:410.9px;font-size:10.5px;line-height:14px;color:#505050;transform:scaleX(0.988)">Filigran</span>
<span class="t" style="left:162.0px;top:410.9px;font-size:10.5px;line-height:14px;color:#505050;transform:scaleX(0.967)">Gebändert</span>
<span class="t" style="left:287.5px;top:410.9px;font-size:10.5px;line-height:14px;color:#505050;transform:scaleX(1.028)">Integral</span>
<span class="t" style="left:40.0px;top:564.9px;font-size:10.5px;line-height:14px;color:#505050;transform:scaleX(1.010)">Ion (dunkel)</span>
<span class="t" style="left:165.5px;top:564.9px;font-size:10.5px;line-height:14px;color:#505050;transform:scaleX(1.016)">Ion (hell)</span>
<span class="t" style="left:295.5px;top:564.9px;font-size:10.5px;line-height:14px;color:#505050;transform:scaleX(1.062)">Pfiff</span>
<div class="r" style="left:9px;top:590px;width:371px;height:1px;background:#e1e1e1;"></div>
<div class="r" style="left:9px;top:591px;width:371px;height:75px;background:#fff;"></div>
<span class="t" style="left:41.0px;top:597.4px;font-size:10.5px;line-height:14px;color:#262626;transform:scaleX(0.995)">Weitere <u>D</u>eckblätter von Office.com</span>
<span class="t" style="left:41.0px;top:621.4px;font-size:10.5px;line-height:14px;color:#262626;transform:scaleX(0.989)"><u>A</u>ktuelles Deckblatt entfernen</span>
<span class="t" style="left:41.0px;top:645.9px;font-size:10.5px;line-height:14px;color:#a6a6a6;transform:scaleX(0.987)">Auswahl im Deckblattkatalog <u>s</u>peichern...</span>
<svg class="r" style="left:367px;top:598px" width="7" height="10"><path d="M1 0.8 L5.5 5 L1 9.2" fill="none" stroke="#444" stroke-width="1.1"/></svg>
<svg class="r" style="left:0;top:590px" width="60" height="75" viewBox="0 590 60 75"><circle cx="26" cy="603.2" r="6.5" fill="#fff" stroke="#444" stroke-width="1.1"/><ellipse cx="26" cy="603.2" rx="2.9" ry="6.5" fill="none" stroke="#444" stroke-width="1"/><path d="M19.8 601 H32.2 M19.8 605.4 H32.2" stroke="#444" stroke-width="1"/><path d="M23 607.2 H33.4" stroke="#fff" stroke-width="3.2"/><path d="M23.6 607.2 H32.6 M30.2 604.6 L32.8 607.2 L30.2 609.8" fill="none" stroke="#2b88d8" stroke-width="1.2"/><path d="M26.6 634 H21.4 V621.3 H27.4 L30.8 624.8 V628" fill="#fff" stroke="#444" stroke-width="1.1" stroke-linejoin="round"/><path d="M27.4 621.3 V624.8 H30.8" fill="none" stroke="#444" stroke-width="1"/><path d="M23.2 625.2 H25.4" stroke="#555" stroke-width="1.2"/><path d="M23.2 627.6 H28.6 M23.2 629.6 H26" stroke="#999" stroke-width="0.9"/><path d="M27.6 629.2 L32.8 634.4 M32.8 629.2 L27.6 634.4" stroke="#e0444c" stroke-width="1.3"/><path d="M25.6 658.6 H21.4 V645.6 H27.4 L30.8 649.2 V650" fill="#fff" stroke="#b4b4b4" stroke-width="1.1" stroke-linejoin="round"/><path d="M27.4 645.6 V649.2 H30.8" fill="none" stroke="#b4b4b4" stroke-width="1"/><path d="M23.2 649.4 H24.6 M23.2 652 H24.6 M23.2 654.6 H24.6" stroke="#b4b4b4" stroke-width="1"/><rect x="26.2" y="650.6" width="6.6" height="8.2" fill="#fff" stroke="#b4b4b4" stroke-width="1.1"/><path d="M27.8 650.6 V653.2 H31.2 V650.6 M27.8 658.8 V656 H31.2 V658.8" fill="none" stroke="#b4b4b4" stroke-width="0.9"/></svg>
</body></html>
